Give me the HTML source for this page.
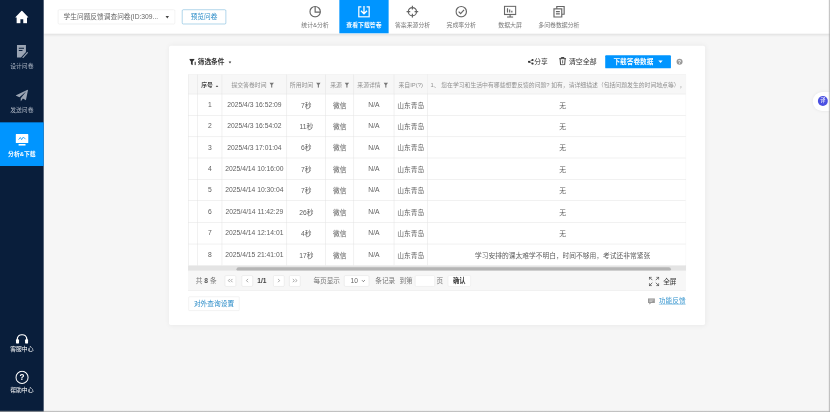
<!DOCTYPE html>
<html lang="zh-CN">
<head>
<meta charset="utf-8">
<title>学生问题反馈调查问卷 - 查看下载答卷</title>
<style>
*{box-sizing:border-box;margin:0;padding:0}
html,body{width:830px;height:412px;overflow:hidden;background:#f6f6f6}
body{font-family:"Liberation Sans","Noto Sans CJK SC",sans-serif;color:#333}
#app{filter:blur(0.7px);position:absolute;left:0;top:0;width:1920px;height:953px;transform:scale(0.432292);transform-origin:0 0;background:#f6f6f6;overflow:hidden}
/* sidebar */
.side{position:absolute;left:0;top:0;width:101px;height:953px;background:#091e3b;z-index:5}
.side .home{position:absolute;left:35px;top:23.5px;width:31px;height:31px}
.side .item{position:absolute;left:0;width:101px;height:101px;text-align:center;color:#a9b2c0;font-size:13.5px}
.side .item svg{position:absolute;left:50%;transform:translateX(-50%)}
.side .item span{position:absolute;left:0;right:0;white-space:nowrap}
.side .item.on{background:#0095ff;color:#fff;font-weight:bold}
/* top */
.top{position:absolute;left:101px;top:0;right:0;height:78px;background:#fff;box-shadow:0 2px 6px rgba(0,0,0,.10);z-index:4}
.sel{position:absolute;left:33px;top:22px;width:271px;height:34px;border:1px solid #e3e3e3;border-radius:3px;font-size:15.5px;line-height:32px;padding-left:12px;color:#666;white-space:nowrap}
.sel i{position:absolute;right:13px;top:14px;border:4.5px solid transparent;border-top:6px solid #444;width:0;height:0}
.prev{position:absolute;left:320px;top:22px;width:102px;height:34px;border:1px solid #4a9fd0;border-radius:3px;font-size:15.5px;line-height:32px;text-align:center;color:#2a8cc8}
.tabs{position:absolute;left:571.3px;top:0;height:77px}
.tab{position:absolute;top:0;width:112.8px;height:77px;text-align:center;font-size:13.6px;color:#777}
.tab svg{position:absolute;left:50%;top:13px;transform:translateX(-50%)}
.tab span{position:absolute;left:-20px;right:-20px;top:49px;line-height:18px;white-space:nowrap}
.tab.on{width:113.6px;background:#0095ff;color:#fff;font-weight:bold}
/* panel */
.panel{position:absolute;left:391px;top:106px;width:1240px;height:646px;background:#fff;border-radius:4px;box-shadow:0 0 12px rgba(0,0,0,.05)}
.filt{position:absolute;left:47px;top:28px;font-size:15.5px;font-weight:bold;color:#333;line-height:20px;white-space:nowrap}
.tool{position:absolute;top:22px;height:30px;line-height:30px;white-space:nowrap;color:#333}
.dl{position:absolute;left:1009px;top:22px;width:152px;height:30px;background:#0095ff;border-radius:2px;color:#fff;font-size:15.4px;font-weight:bold;line-height:30px;padding-left:19px;white-space:nowrap}
.dl i{position:absolute;right:19px;top:12px;border:5px solid transparent;border-top:6px solid #fff}
.help{position:absolute;left:1174px;top:30px;width:14px;height:14px;border-radius:50%;background:#9a9a9a;color:#fff;font-size:11px;font-weight:bold;line-height:14px;text-align:center}
.tw{position:absolute;left:44px;top:66px;width:1152px;height:444px;overflow:hidden;border-right:1px solid #e6e6e6}
table{width:1180px;border-collapse:collapse;table-layout:fixed}
th,td{border:1px solid #dedede;text-align:center;white-space:nowrap;overflow:hidden}
th{height:44.5px;background:#f7f7f7;font-size:13.5px;text-spacing-trim:space-all;font-weight:normal;color:#909090}
td{text-spacing-trim:space-all;height:49.6px;font-size:15.6px;color:#606060;background:#fff}
th.q{text-align:left;padding-left:7px}
.f{vertical-align:-2px;margin-left:6px}
.sbar{position:absolute;left:44px;top:509px;width:1152px;height:14px;background:#e4e4e4}
.sbar b{position:absolute;left:112px;top:3px;width:1005px;height:10px;border-radius:5px;background:#b5b5b5}
.pager{position:absolute;left:44px;top:520px;width:1152px;height:47px;background:#f7f7f7;border-bottom:1px solid #e9e9e9;font-size:15.4px;color:#777}
.pager > *{position:absolute;top:11px;height:26px;line-height:26px;white-space:nowrap}
.pb{width:26px;border:1px solid #ddd;border-radius:3px;background:#fff;text-align:center;color:#777;font-size:13px;line-height:23px !important}
.ext{position:absolute;left:45px;top:580px;width:118px;height:33px;border:1px solid #e4e4e4;border-radius:2px;font-size:15.5px;line-height:31px;text-align:center;color:#2a8cc8;background:#fff}
.fb{position:absolute;left:1108px;top:580px;font-size:15.5px;color:#3896cf;line-height:22px;white-space:nowrap}
.fb u{margin-left:9px;text-decoration-thickness:1px}
.flt{position:absolute;right:0;top:213px;width:40px;height:44px;background:#fff;border-radius:22px 0 0 22px;box-shadow:0 0 8px rgba(0,0,0,.08);z-index:6}
.flt b{position:absolute;left:12px;top:9px;width:23px;height:23px;border-radius:50%;background:#4b50e2;color:#fff;font-size:12px;line-height:23px;text-align:center;font-weight:normal}
.edgeR{position:absolute;right:0;top:0;width:2px;height:412px;background:linear-gradient(90deg,rgba(150,150,150,.10) 50%,rgba(150,150,150,.55) 50%);z-index:9}
.edgeB{position:absolute;left:0;bottom:0;height:2px;width:830px;background:linear-gradient(180deg,rgba(170,170,170,.10) 50%,rgba(170,170,170,.70) 50%);z-index:9}
</style>
</head>
<body>
<div id="app">

<div class="side">
  <svg class="home" viewBox="0 0 31 31"><path d="M15.5 0 L31 16.5 H27.5 V30 H18.8 V20.5 H12.2 V30 H3.5 V16.5 H0 Z" fill="#fff"/></svg>
  <div class="item" style="top:79px">
    <svg width="26" height="31" style="top:25px;left:52px" viewBox="0 0 26 31"><path d="M0 0 H21 V16 L9.5 29 H0 Z" fill="#9aa4b3"/><path d="M4.5 7.5 H16.5 M4.5 13 H13" stroke="#091e3b" stroke-width="2.4" fill="none"/><path d="M12.5 29 L24 16 L26 18 L14.5 31 Z" fill="#9aa4b3"/></svg>
    <span style="top:62px">设计问卷</span>
  </div>
  <div class="item" style="top:180px">
    <svg width="30" height="28" style="top:27px" viewBox="0 0 30 28"><path d="M29 0 L0 14 L9 18 L25 4 L12 20 V28 L17 21 L24 25 Z" fill="#9aa4b3"/></svg>
    <span style="top:63px">发送问卷</span>
  </div>
  <div class="item on" style="top:283px">
    <svg width="30" height="27" style="top:27px" viewBox="0 0 30 27"><path d="M2 0 H28 Q30 0 30 2 V19 Q30 21 28 21 H2 Q0 21 0 19 V2 Q0 0 2 0 Z M7 23 H23 V27 H7 Z" fill="#fff"/><path d="M7 13 L11 8 L14 13 L18 7 L23 12" stroke="#0095ff" stroke-width="1.8" fill="none"/></svg>
    <span style="top:61px">分析&amp;下载</span>
  </div>
  <div class="item" style="top:750px;color:#fff">
    <svg width="30" height="22" style="top:23px" viewBox="0 0 30 22"><path d="M4 16 V12 A11 11 0 0 1 26 12 V16" stroke="#fff" stroke-width="3" fill="none"/><rect x="1" y="12" width="7" height="10" rx="2" fill="#fff"/><rect x="22" y="12" width="7" height="10" rx="2" fill="#fff"/></svg>
    <span style="top:46px">客服中心</span>
  </div>
  <div class="item" style="top:840px;color:#fff">
    <svg width="32" height="32" style="top:17px" viewBox="0 0 32 32"><circle cx="16" cy="16" r="14" stroke="#fff" stroke-width="2.4" fill="none"/><text x="16" y="23" font-size="19" font-weight="bold" text-anchor="middle" fill="#fff" font-family="Liberation Sans, sans-serif">?</text></svg>
    <span style="top:50px">帮助中心</span>
  </div>
</div>

<div class="top">
  <div class="sel">学生问题反馈调查问卷(ID:309...<i></i></div>
  <div class="prev">预览问卷</div>
  <div class="tabs">
    <div class="tab" style="left:0">
      <svg width="28" height="28" viewBox="0 0 28 28"><circle cx="14" cy="14" r="12" stroke="#666" stroke-width="2.7" fill="none"/><path d="M14 2 V15 H26" stroke="#666" stroke-width="2.7" fill="none"/></svg>
      <span>统计&amp;分析</span></div>
    <div class="tab on" style="left:112.8px">
      <svg width="28" height="28" viewBox="0 0 28 28"><path d="M8 3 H2 V26 H26 V3 H20" stroke="#fff" stroke-width="2.8" fill="none"/><path d="M14 1 V18 M7 12 L14 19 L21 12" stroke="#fff" stroke-width="3" fill="none"/></svg>
      <span>查看下载答卷</span></div>
    <div class="tab" style="left:225.6px">
      <svg width="28" height="28" viewBox="0 0 28 28"><circle cx="14" cy="14" r="9.5" stroke="#666" stroke-width="2.7" fill="none"/><path d="M14 0 V9 M14 19 V28 M0 14 H9 M19 14 H28" stroke="#666" stroke-width="2.8"/></svg>
      <span>答案来源分析</span></div>
    <div class="tab" style="left:338.4px">
      <svg width="28" height="28" viewBox="0 0 28 28"><circle cx="14" cy="14" r="12" stroke="#666" stroke-width="2.7" fill="none"/><path d="M8 14 L12.5 18.5 L20.5 10" stroke="#666" stroke-width="2.8" fill="none"/></svg>
      <span>完成率分析</span></div>
    <div class="tab" style="left:451.2px">
      <svg width="30" height="28" viewBox="0 0 30 28"><rect x="2" y="1.5" width="26" height="19" stroke="#666" stroke-width="2.7" fill="none"/><path d="M9 6 V16 M14 9 V16 M19 12 V16" stroke="#666" stroke-width="2.8"/><path d="M8 26.5 H22 M15 21 V26" stroke="#666" stroke-width="2.6"/></svg>
      <span>数据大屏</span></div>
    <div class="tab" style="left:564.0px">
      <svg width="28" height="28" viewBox="0 0 28 28"><path d="M9 7 V2 H26 V20 H21" stroke="#666" stroke-width="2.7" fill="none"/><rect x="2.5" y="7.5" width="18" height="19" stroke="#666" stroke-width="2.7" fill="none"/><path d="M7 14 H16 M7 19 H16" stroke="#666" stroke-width="2.7"/></svg>
      <span>多问卷数据分析</span></div>
  </div>
</div>

<div class="panel">
  <div class="filt"><svg width="15" height="15" viewBox="0 0 15 15" style="vertical-align:-2px"><path d="M0 0 H11.5 V2 L7.8 6 V15 L3.7 12.5 V6 L0 2 Z M12.3 7 H15 V15 H12.3 Z" fill="#333"/></svg> <span style="margin-left:0px">筛选条件</span> <i style="display:inline-block;border:3.5px solid transparent;border-top:5px solid #333;vertical-align:-1px;margin-left:5px"></i></div>
  <div class="tool" style="left:830px;font-size:15.5px"><svg width="14" height="14" viewBox="0 0 13 13" style="vertical-align:-1.5px;margin-right:1px"><circle cx="2.6" cy="6.5" r="2.4" fill="#333"/><circle cx="10.2" cy="2.6" r="2.4" fill="#333"/><circle cx="10.2" cy="10.4" r="2.4" fill="#333"/><path d="M2.6 6.5 L10.2 2.6 M2.6 6.5 L10.2 10.4" stroke="#333" stroke-width="1.3"/></svg>分享</div>
  <div class="tool" style="left:902px;font-size:16px"><svg width="17" height="19" viewBox="0 0 16 18" style="vertical-align:-3px;margin-right:6px"><path d="M0.5 3.5 H15.5 M5 3 V1 H11 V3" stroke="#333" stroke-width="2" fill="none"/><path d="M2.5 4 L3.5 17 H12.5 L13.5 4" stroke="#333" stroke-width="2" fill="none"/><path d="M8 7 V14" stroke="#333" stroke-width="1.6"/></svg>清空全部</div>
  <div class="dl">下载答卷数据<i></i></div>
  <div class="help">?</div>

  <div class="tw"><table>
    <colgroup><col style="width:22px"><col style="width:56px"><col style="width:150px"><col style="width:90px"><col style="width:65px"><col style="width:93px"><col style="width:77px"><col></colgroup>
    <tr><th></th><th style="color:#444;font-weight:bold">序号 <i style="display:inline-block;border:3px solid transparent;border-bottom:4px solid #555;vertical-align:0;margin-left:3px"></i></th><th style="padding-right:8px">提交答卷时间<svg class="f" width="11" height="12" viewBox="0 0 11 12"><path d="M0 0 H11 L6.8 5.5 V12 H4.2 V5.5 Z" fill="#777"/></svg></th><th style="padding-right:5px">所用时间<svg class="f" width="11" height="12" viewBox="0 0 11 12"><path d="M0 0 H11 L6.8 5.5 V12 H4.2 V5.5 Z" fill="#777"/></svg></th><th>来源<svg class="f" width="11" height="12" viewBox="0 0 11 12"><path d="M0 0 H11 L6.8 5.5 V12 H4.2 V5.5 Z" fill="#777"/></svg></th><th style="padding-right:6px">来源详情<svg class="f" width="11" height="12" viewBox="0 0 11 12"><path d="M0 0 H11 L6.8 5.5 V12 H4.2 V5.5 Z" fill="#777"/></svg></th><th>来自IP(?)</th><th class="q">1、 您在学习和生活中有哪些想要反馈的问题? 如有，请详细描述（包括问题发生的时间地点等），</th></tr>
    <tr><td></td><td>1</td><td>2025/4/3 16:52:09</td><td>7秒</td><td>微信</td><td>N/A</td><td>山东青岛</td><td>无</td></tr>
    <tr><td></td><td>2</td><td>2025/4/3 16:54:02</td><td>11秒</td><td>微信</td><td>N/A</td><td>山东青岛</td><td>无</td></tr>
    <tr><td></td><td>3</td><td>2025/4/3 17:01:04</td><td>6秒</td><td>微信</td><td>N/A</td><td>山东青岛</td><td>无</td></tr>
    <tr><td></td><td>4</td><td>2025/4/14 10:16:00</td><td>7秒</td><td>微信</td><td>N/A</td><td>山东青岛</td><td>无</td></tr>
    <tr><td></td><td>5</td><td>2025/4/14 10:30:04</td><td>7秒</td><td>微信</td><td>N/A</td><td>山东青岛</td><td>无</td></tr>
    <tr><td></td><td>6</td><td>2025/4/14 11:42:29</td><td>26秒</td><td>微信</td><td>N/A</td><td>山东青岛</td><td>无</td></tr>
    <tr><td></td><td>7</td><td>2025/4/14 12:14:01</td><td>4秒</td><td>微信</td><td>N/A</td><td>山东青岛</td><td>无</td></tr>
    <tr><td></td><td>8</td><td>2025/4/15 21:41:01</td><td>17秒</td><td>微信</td><td>N/A</td><td>山东青岛</td><td>学习安排的课太难学不明白，时间不够用，考试还非常紧张</td></tr>
  </table></div>
  <div class="sbar"><b></b></div>
  <div class="pager">
    <span style="left:18px">共 <b style="color:#555">8</b> 条</span>
    <span class="pb" style="left:85px"><svg width="14" height="10" viewBox="0 0 14 10"><path d="M6 1 L2 5 L6 9 M12 1 L8 5 L12 9" stroke="#777" stroke-width="1.5" fill="none"/></svg></span>
    <span class="pb" style="left:124px"><svg width="8" height="10" viewBox="0 0 8 10"><path d="M6 1 L2 5 L6 9" stroke="#777" stroke-width="1.5" fill="none"/></svg></span>
    <span style="left:160px;color:#444;font-weight:bold;font-size:15.4px">1/1</span>
    <span class="pb" style="left:197px"><svg width="8" height="10" viewBox="0 0 8 10"><path d="M2 1 L6 5 L2 9" stroke="#777" stroke-width="1.5" fill="none"/></svg></span>
    <span class="pb" style="left:234px"><svg width="14" height="10" viewBox="0 0 14 10"><path d="M2 1 L6 5 L2 9 M8 1 L12 5 L8 9" stroke="#777" stroke-width="1.5" fill="none"/></svg></span>
    <span style="left:290px">每页显示</span>
    <span style="left:361px;width:58px;border:1px solid #ddd;border-radius:3px;background:#fff;line-height:24px;padding-left:14px;color:#666">10<svg width="9" height="6" viewBox="0 0 9 6" style="position:absolute;right:8px;top:9px"><path d="M1 1 L4.5 4.5 L8 1" stroke="#444" stroke-width="1.6" fill="none"/></svg></span>
    <span style="left:433px">条记录</span>
    <span style="left:489px">到第</span>
    <span style="left:525px;width:46px;border:1px solid #e2e2e2;border-radius:3px;background:#fff"></span>
    <span style="left:575px">页</span>
    <span style="left:601px;width:53px;border:1px solid #e6e6e6;border-radius:3px;background:#fff;color:#333;font-weight:bold;text-align:center;line-height:24px;font-size:14.5px">确认</span>
    <span style="left:1066px;top:13px;color:#333;font-size:15.4px"><svg width="24" height="22" viewBox="0 0 24 22" style="vertical-align:-5px;margin-right:9px"><path d="M1 7 V1 H7 M1 1 L8 8 M17 1 H23 V7 M23 1 L16 8 M1 15 V21 H7 M1 21 L8 14 M23 15 V21 H17 M23 21 L16 14" stroke="#444" stroke-width="1.8" fill="none"/></svg>全屏</span>
  </div>
  <div class="ext">对外查询设置</div>
  <div class="fb"><svg width="16" height="15" viewBox="0 0 16 15" style="vertical-align:-3px"><path d="M0 0 H16 V11 H7 L3 15 V11 H0 Z" fill="#999"/><path d="M3 4 H13 M3 7 H10" stroke="#fff" stroke-width="1.2"/></svg><u>功能反馈</u></div>
</div>

<div class="flt"><b>译</b></div>
</div>
<div class="edgeR"></div>
<div class="edgeB"></div>
</body>
</html>
